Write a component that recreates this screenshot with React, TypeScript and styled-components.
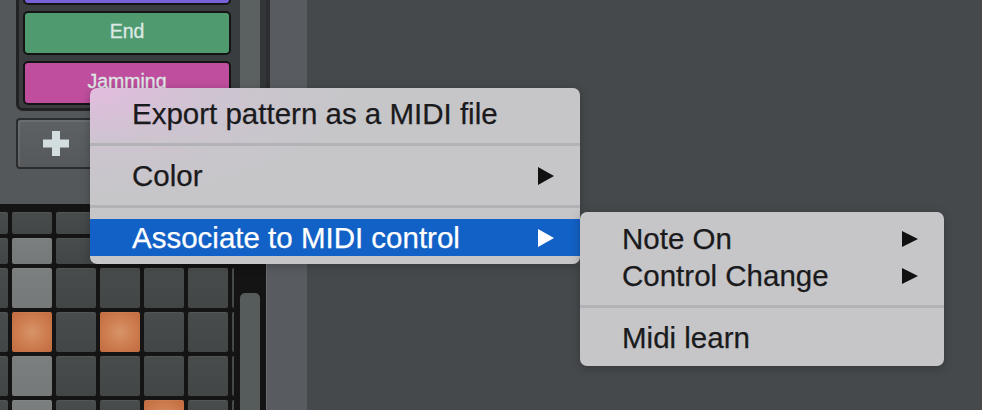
import React from "react";
import styled, { createGlobalStyle } from "styled-components";

const GlobalStyle = createGlobalStyle`
  html, body {
    margin: 0;
    padding: 0;
  }
  body {
    width: 982px;
    height: 410px;
    overflow: hidden;
    background: #46494c;
    font-family: "Liberation Sans", Arial, sans-serif;
  }
  #root {
    width: 982px;
    height: 410px;
  }
`;

const Page = styled.div`
  position: relative;
  display: flex;
  width: 982px;
  height: 410px;
  overflow: hidden;
  background: #46494c;
`;

const LeftPanel = styled.div`
  display: flex;
  flex-direction: column;
  width: 266px;
  flex-shrink: 0;
`;

const PatternSection = styled.div`
  display: flex;
  height: 204px;
  flex-shrink: 0;
  background: #54585b;
  overflow: hidden;
`;

const PatternArea = styled.div`
  display: flex;
  flex-direction: column;
  width: 240px;
  padding-left: 16px;
  box-sizing: border-box;
`;

const PatternList = styled.div`
  display: flex;
  flex-direction: column;
  gap: 6px;
  margin-top: -39px;
  padding: 0 9px 3px 4px;
  background: #3a3d3f;
  border-left: 3px solid #202224;
  border-bottom: 3px solid #202224;
  border-bottom-left-radius: 7px;
`;

const PatternButton = styled.div<{ $color: string }>`
  display: flex;
  align-items: center;
  justify-content: center;
  height: 44px;
  box-sizing: border-box;
  padding-bottom: 3px;
  border: 2px solid #141414;
  border-radius: 5px;
  background: ${({ $color }) => $color};
  color: #dde9e5;
  font-size: 19.5px;
  -webkit-text-stroke: 0.3px currentColor;
`;

const AddButton = styled.div`
  display: flex;
  align-items: center;
  justify-content: center;
  width: 80px;
  height: 51px;
  margin-top: 7px;
  box-sizing: border-box;
  border: 2px solid #2a2c2e;
  border-radius: 4px;
  background: linear-gradient(180deg, #5d6164 0%, #55595c 100%);
  box-shadow: inset 2px 2px 0 rgba(255, 255, 255, 0.08);
`;

const ScrollTrack = styled.div`
  width: 20px;
  background: #5b6061;
`;

const DarkEdge = styled.div`
  width: 6px;
  background: #333638;
`;

const GridSection = styled.div`
  display: flex;
  flex: 1;
  background: #141414;
  overflow: hidden;
`;

const GridClip = styled.div`
  width: 234px;
  padding-top: 8px;
  overflow: hidden;
  flex-shrink: 0;
`;

const Grid = styled.div`
  display: grid;
  grid-template-columns: repeat(7, 40px);
  grid-template-rows: 22px 26px repeat(4, 40px);
  gap: 4px;
  margin-left: -32px;
`;

type PadKind = "off" | "dim" | "on";

const Pad = styled.div<{ $kind: PadKind }>`
  border-radius: 2px;
  background: ${({ $kind }) =>
    $kind === "on"
      ? "radial-gradient(circle at 50% 50%, #d8946a 0%, #cd7e50 50%, #c26a3f 100%)"
      : $kind === "dim"
      ? "linear-gradient(180deg, #7b7f80 0%, #76797a 100%)"
      : "linear-gradient(180deg, #484c4d 0%, #424647 100%)"};
  box-shadow: inset 0 1px 0 rgba(255, 255, 255, 0.05);
`;

const ScrollGutter = styled.div`
  display: flex;
  flex: 1;
  padding: 89px 6px 0 6px;
`;

const Thumb = styled.div`
  width: 20px;
  background: #565b5b;
  border-radius: 5px 5px 0 0;
`;

const SideColumn = styled.div`
  display: flex;
  flex-direction: column;
  width: 41px;
  flex-shrink: 0;
  background: #585c61;
`;

const SideColumnTop = styled.div`
  height: 204px;
  border-left: 4px solid #2c2e30;
`;

const SideColumnBottom = styled.div`
  flex: 1;
  border-left: 1px solid #6a6f73;
`;

const Main = styled.div`
  flex: 1;
  background: #46494c;
`;

const Menu = styled.div<{ $left: number; $top: number; $width: number; $pad: string }>`
  position: absolute;
  left: ${({ $left }) => $left}px;
  top: ${({ $top }) => $top}px;
  width: ${({ $width }) => $width}px;
  padding: ${({ $pad }) => $pad};
  box-sizing: border-box;
  border-radius: 7px;
  overflow: hidden;
  background: #c6c6c9;
  box-shadow: 0 2px 10px rgba(0, 0, 0, 0.25);
`;

const MainMenu = styled(Menu)`
  background:
    radial-gradient(ellipse 260px 110px at 0 0, rgba(228, 188, 224, 0.95) 0%, rgba(212, 194, 214, 0.5) 50%, rgba(198, 198, 201, 0) 100%),
    #c6c6c9;
`;

const MenuItem = styled.div<{ $active?: boolean }>`
  display: flex;
  align-items: center;
  justify-content: space-between;
  height: 37px;
  padding: 0 26px 0 42px;
  background: ${({ $active }) => ($active ? "#1261c6" : "transparent")};
  color: ${({ $active }) => ($active ? "#ffffff" : "#1a1a1c")};
  font-size: 29.5px;
  line-height: 37px;
  white-space: nowrap;
  -webkit-text-stroke: 0.25px currentColor;
`;

const Separator = styled.div`
  height: 3px;
  margin: 11px 0;
  background: #b3b2b6;
`;

const Arrow = ({ h, color }: { h: number; color: string }) => (
  <svg width="16" height={h} viewBox={`0 0 16 ${h}`}>
    <polygon points={`0,0 16,${h / 2} 0,${h}`} fill={color} />
  </svg>
);

const rows: PadKind[][] = [
  ["off", "off", "off", "off", "off", "off", "off"],
  ["off", "dim", "off", "off", "off", "off", "off"],
  ["off", "dim", "off", "off", "off", "off", "off"],
  ["off", "on", "off", "on", "off", "off", "off"],
  ["off", "dim", "off", "off", "off", "off", "off"],
  ["off", "dim", "off", "off", "on", "off", "off"],
];

export default function App() {
  return (
    <>
      <GlobalStyle />
      <Page>
        <LeftPanel>
          <PatternSection>
            <PatternArea>
              <PatternList>
                <PatternButton $color="#7860d6" />
                <PatternButton $color="#4f9a6f">End</PatternButton>
                <PatternButton $color="#bf4f9e">Jamming</PatternButton>
              </PatternList>
              <AddButton>
                <svg width="26" height="25" viewBox="0 0 26 25">
                  <rect x="9" y="0" width="8" height="25" fill="#d3dcdf" />
                  <rect x="0" y="8.5" width="26" height="8" fill="#d3dcdf" />
                </svg>
              </AddButton>
            </PatternArea>
            <ScrollTrack />
            <DarkEdge />
          </PatternSection>
          <GridSection>
            <GridClip>
              <Grid>
                {rows.map((row, r) =>
                  row.map((kind, c) => <Pad key={`${r}-${c}`} $kind={kind} />)
                )}
              </Grid>
            </GridClip>
            <ScrollGutter>
              <Thumb />
            </ScrollGutter>
          </GridSection>
        </LeftPanel>
        <SideColumn>
          <SideColumnTop />
          <SideColumnBottom />
        </SideColumn>
        <Main />

        <MainMenu $left={90} $top={88} $width={490} $pad="7px 0 8px">
          <MenuItem>
            <span>Export pattern as a MIDI file</span>
          </MenuItem>
          <Separator />
          <MenuItem>
            <span>Color</span>
            <Arrow h={18} color="#111111" />
          </MenuItem>
          <Separator />
          <MenuItem $active>
            <span>Associate to MIDI control</span>
            <Arrow h={18} color="#ffffff" />
          </MenuItem>
        </MainMenu>

        <Menu $left={580} $top={212} $width={364} $pad="8px 0 10px">
          <MenuItem>
            <span>Note On</span>
            <Arrow h={16} color="#111111" />
          </MenuItem>
          <MenuItem>
            <span>Control Change</span>
            <Arrow h={16} color="#111111" />
          </MenuItem>
          <Separator />
          <MenuItem>
            <span>Midi learn</span>
          </MenuItem>
        </Menu>
      </Page>
    </>
  );
}
